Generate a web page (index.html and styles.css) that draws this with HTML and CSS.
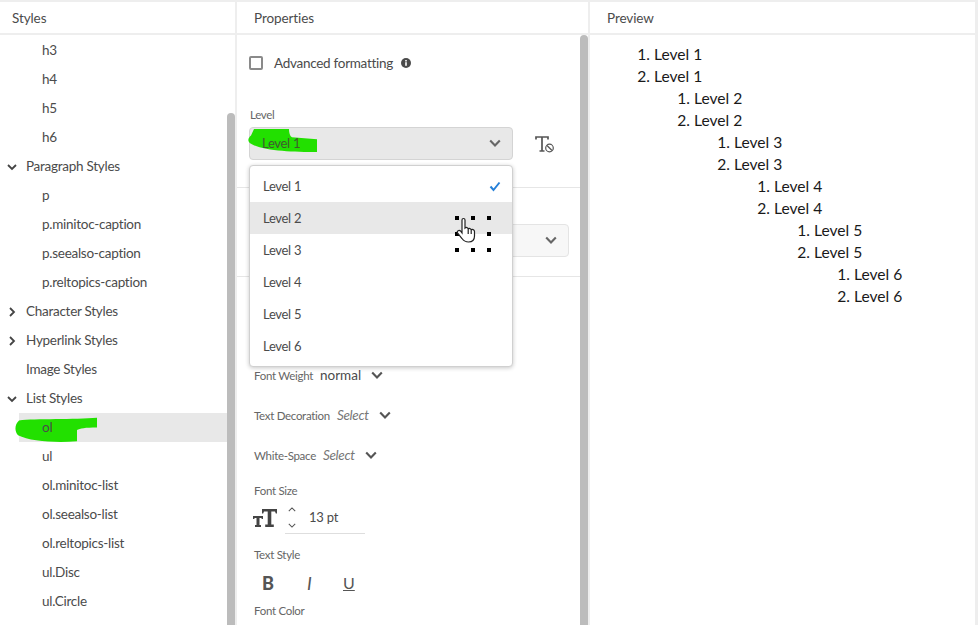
FILE: index.html
```html
<!DOCTYPE html>
<html lang="en">
<head>
<meta charset="utf-8">
<title>Styles</title>
<link rel="stylesheet" href="styles.css">
</head>
<body>
<div class="app">
  <section class="col col-styles">
    <header class="col-head">Styles</header>
    <div class="tree">
      <div class="row child">h3</div>
      <div class="row child">h4</div>
      <div class="row child">h5</div>
      <div class="row child">h6</div>
      <div class="row group"><svg class="twist" viewBox="0 0 10 10"><path d="M1 3l4 4 4-4"/></svg>Paragraph Styles</div>
      <div class="row child">p</div>
      <div class="row child">p.minitoc-caption</div>
      <div class="row child">p.seealso-caption</div>
      <div class="row child">p.reltopics-caption</div>
      <div class="row group"><svg class="twist" viewBox="0 0 10 10"><path d="M3 1l4 4-4 4"/></svg>Character Styles</div>
      <div class="row group"><svg class="twist" viewBox="0 0 10 10"><path d="M3 1l4 4-4 4"/></svg>Hyperlink Styles</div>
      <div class="row group">Image Styles</div>
      <div class="row group"><svg class="twist" viewBox="0 0 10 10"><path d="M1 3l4 4 4-4"/></svg>List Styles</div>
      <div class="row child selected">
        <svg class="mark mark-ol" viewBox="0 0 82 30" preserveAspectRatio="none"><path d="M4 4C20 2 60 3 82 1V12C70 12 65 13 62 15V28C40 30 15 28 3 21-1 16 0 8 4 4Z"/></svg>
        <span class="row-text">ol</span>
      </div>
      <div class="row child">ul</div>
      <div class="row child">ol.minitoc-list</div>
      <div class="row child">ol.seealso-list</div>
      <div class="row child">ol.reltopics-list</div>
      <div class="row child">ul.Disc</div>
      <div class="row child">ul.Circle</div>
    </div>
    <div class="scrollbar scrollbar-styles"></div>
  </section>

  <section class="col col-props">
    <header class="col-head col-head-props">Properties</header>
    <div class="props">
      <div class="adv">
        <span class="checkbox"></span>
        <span class="adv-label">Advanced formatting</span>
        <svg class="info" viewBox="0 0 10 10"><circle cx="5" cy="5" r="5"/><rect x="4.2" y="4.2" width="1.6" height="3.6" fill="#fff"/><rect x="4.2" y="2" width="1.6" height="1.5" fill="#fff"/></svg>
      </div>
      <div class="level">
        <div class="small-label level-label">Level</div>
        <div class="level-row">
          <div class="select select-level">
            <span class="select-text">Level 1</span>
            <svg class="chev" viewBox="0 0 10 10"><path d="M1 3l4 4 4-4"/></svg>
            <svg class="mark mark-level" viewBox="0 0 70 26" preserveAspectRatio="none"><path d="M6 0H41C41 4 42 8 44 9L69 11V25C45 25 15 24 3 16-1 13 0 10 3 7Z"/></svg>
          </div>
          <svg class="clear-format" viewBox="0 0 20 18"><path class="clear-t" d="M1 3.500V1H13V3.500M7 1V15M4.500 15H9.500" /><circle cx="14.500" cy="12" r="3.800"/><path d="M12 9.500L17 14.500"/></svg>
        </div>
      </div>
      <div class="second">
        <div class="select select-second">
          <svg class="chev" viewBox="0 0 10 10"><path d="M1 3l4 4 4-4"/></svg>
        </div>
      </div>
      <div class="type">
        <div class="inline-prop weight"><span class="small-label">Font Weight</span><span class="value">normal</span><svg class="chev-small" viewBox="0 0 10 10"><path d="M1 3l4 4 4-4"/></svg></div>
        <div class="inline-prop"><span class="small-label">Text Decoration</span><span class="value placeholder">Select</span><svg class="chev-small" viewBox="0 0 10 10"><path d="M1 3l4 4 4-4"/></svg></div>
        <div class="inline-prop"><span class="small-label">White-Space</span><span class="value placeholder">Select</span><svg class="chev-small" viewBox="0 0 10 10"><path d="M1 3l4 4 4-4"/></svg></div>
        <div class="small-label size-label">Font Size</div>
        <div class="size-row">
          <svg class="size-icon" viewBox="0 0 24 18"><path d="M0 7H10V10H8.800L8.300 9H6.500V16H8V18H2V16H3.500V9H1.700L1.200 10H0ZM9 0H24V4.500H22.800L22 2.500H18.300V15.500H20.800V18H12.200V15.500H14.700V2.500H11L10.200 4.500H9Z"/></svg>
          <div class="stepper">
            <svg viewBox="0 0 10 6"><path d="M1 5l4-4 4 4"/></svg>
            <svg viewBox="0 0 10 6"><path d="M1 1l4 4 4-4"/></svg>
          </div>
          <div class="size-value">13 pt</div>
        </div>
        <div class="small-label style-label">Text Style</div>
        <div class="style-row"><b class="sb">B</b><i class="si">I</i><u class="su">U</u></div>
        <div class="small-label color-label">Font Color</div>
      </div>
    </div>
    <div class="menu">
      <div class="menu-item">Level 1<svg class="check" viewBox="0 0 12 10"><path d="M1.500 5L4.500 8.500 10.500 1"/></svg></div>
      <div class="menu-item hover">Level 2</div>
      <div class="menu-item">Level 3</div>
      <div class="menu-item">Level 4</div>
      <div class="menu-item">Level 5</div>
      <div class="menu-item">Level 6</div>
    </div>
    <svg class="cursor" viewBox="0 0 40 40">
      <g class="handles"><rect x="0" y="0" width="4" height="4"/><rect x="16" y="0" width="4" height="4"/><rect x="32" y="0" width="4" height="4"/><rect x="0" y="16" width="4" height="4"/><rect x="32" y="16" width="4" height="4"/><rect x="0" y="32" width="4" height="4"/><rect x="16" y="32" width="4" height="4"/><rect x="32" y="32" width="4" height="4"/></g>
      <path class="hand" d="M7 4C7 2 10 2 10 4V12C11 11 13 11.500 13.200 13C14 12 16 12.500 16.200 14C17 13 19.500 13.500 19.500 15.500V20C19.500 24.500 17 26 13.500 26C10 26 8.500 24.500 7 22.500L2.500 17C1.500 15 4 13.500 5.500 15L7 17ZM13.200 13V18M16.200 14V18"/>
    </svg>
    <div class="scrollbar scrollbar-props"></div>
  </section>

  <section class="col col-preview">
    <header class="col-head col-head-preview">Preview</header>
    <div class="preview">
      <ol><li>Level 1</li><li>Level 1
        <ol><li>Level 2</li><li>Level 2
          <ol><li>Level 3</li><li>Level 3
            <ol><li>Level 4</li><li>Level 4
              <ol><li>Level 5</li><li>Level 5
                <ol><li>Level 6</li><li>Level 6</li></ol>
              </li></ol>
            </li></ol>
          </li></ol>
        </li></ol>
      </li></ol>
    </div>
  </section>
</div>
</body>
</html>
```
FILE: styles.css
```css
* { box-sizing: border-box; }
html, body { margin: 0; height: 100%; }
body {
  background: #eeeeee;
  font-family: "Lato", "Liberation Sans", sans-serif;
  color: #4b4b4b;
  overflow: hidden;
}
.app {
  display: flex;
  width: 975px;
  height: 625px;
  padding-top: 2px;
  gap: 2px;
}
.col {
  position: relative;
  background: #fff;
  overflow: hidden;
  height: 623px;
}
.col-styles { width: 235px; }
.col-props { width: 351px; }
.col-preview { width: 385px; }
.col-head {
  height: 33px;
  line-height: 32px;
  padding-left: 12px;
  font-size: 13.5px;
  letter-spacing: -0.1px;
  border-bottom: 2px solid #eeeeee;
}
.col-head-props { padding-left: 17px; }
.col-head-preview { padding-left: 17px; }
.tree { padding-top: 1px; }
.row {
  position: relative;
  height: 29px;
  line-height: 29px;
  font-size: 13.5px;
  letter-spacing: -0.27px;
  white-space: nowrap;
}
.child { padding-left: 42px; }
.group { padding-left: 26px; }
.twist {
  position: absolute;
  left: 7px;
  top: 10px;
  width: 10px;
  height: 10px;
  fill: none;
  stroke: #444;
  stroke-width: 1.800;
}
.selected {
  background: #e8e8e8;
  margin-left: 19px;
  margin-right: 8px;
  padding-left: 23px;
}
.row-text { position: relative; }
.mark { position: absolute; fill: #22e000; }
.mark-ol { left: -4px; top: 4px; width: 82px; height: 26px; }
.scrollbar {
  position: absolute;
  width: 8px;
  background: #bcbcbc;
  border-radius: 4px 4px 0 0;
  bottom: 0;
}
.scrollbar-styles { right: 0; top: 111px; }
.scrollbar-props { right: 0; top: 33px; }
.props { padding-left: 12px; }
.adv {
  display: flex;
  align-items: center;
  height: 55px;
}
.checkbox {
  width: 14px;
  height: 14px;
  border: 2px solid #8a8a8a;
  border-radius: 2px;
  margin-right: 11px;
}
.adv-label { font-size: 13.5px; letter-spacing: -0.28px; }
.info { width: 10px; height: 10px; margin-left: 8px; fill: #4b4b4b; }
.small-label { font-size: 11.500px; letter-spacing: -0.3px; color: #666; }
.level { height: 98px; border-bottom: 1px solid #e6e6e6; margin-right: 8px; margin-left: -12px; padding-left: 12px; }
.level-label { padding: 17px 0 0 1px; line-height: 15px; height: 37px; }
.level-row { display: flex; align-items: center; }
.select {
  position: relative;
  display: flex;
  align-items: center;
  justify-content: space-between;
  height: 33px;
  border: 1px solid #d4d4d4;
  border-radius: 4px;
  padding: 0 11px 2px 12px;
  font-size: 13px;
  letter-spacing: -0.3px;
}
.select-level { width: 264px; background: #e8e8e8; }
.select-text { position: relative; z-index: 1; color: #3f5a2f; }
.mark-level { left: -2px; top: 1px; width: 70px; height: 24px; }
.chev { width: 12px; height: 12px; fill: none; stroke: #666; stroke-width: 1.800; }
.clear-format {
  width: 20px;
  height: 18px;
  margin-left: 22px;
  margin-top: 2px;
  fill: none;
  stroke: #555;
  stroke-width: 1.200;
}
.clear-t { stroke-width: 1.700; }
.second { height: 89px; border-bottom: 1px solid #e6e6e6; margin-right: 8px; margin-left: -12px; padding: 36px 12px 0 12px; }
.select-second { width: 320px; background: #f7f7f7; justify-content: flex-end; border-color: #e4e4e4; }
.type { padding-left: 5px; }
.inline-prop {
  display: flex;
  align-items: center;
  height: 40px;
  gap: 7px;
}
.weight { margin-top: 78px; }
.value { font-size: 13.500px; color: #4b4b4b; }
.placeholder { font-style: italic; color: #777; letter-spacing: -0.3px; }
.chev-small { width: 12px; height: 12px; margin-left: 3px; fill: none; stroke: #555; stroke-width: 1.800; }
.size-label { margin-top: 8px; line-height: 15px; }
.size-row { display: flex; align-items: center; height: 37px; margin-top: 1px; margin-left: -1px; }
.size-icon { width: 24px; height: 18px; fill: #444; }
.stepper { display: flex; flex-direction: column; gap: 11px; margin-left: 11px; }
.stepper svg { display: block; width: 8px; height: 5px; fill: none; stroke: #555; stroke-width: 1.300; }
.size-value {
  width: 80px;
  height: 33px;
  line-height: 33px;
  margin-left: -11px;
  padding-left: 24px;
  font-size: 13px;
  border-bottom: 1px solid #dedede;
  letter-spacing: -0.2px;
}
.style-label { margin-top: 11px; line-height: 15px; }
.style-row { display: flex; align-items: center; height: 41px; font-size: 17px; color: #555; }
.sb { width: 40px; padding-left: 8px; font-size: 18px; font-weight: 900; }
.si { width: 40px; padding-left: 13px; font-size: 18px; font-style: italic; font-weight: 400; }
.su { margin-left: 9px; font-size: 16px; }
.color-label { line-height: 15px; }
.menu {
  position: absolute;
  left: 12px;
  top: 163px;
  width: 264px;
  height: 202px;
  background: #fff;
  border: 1px solid #d0d0d0;
  border-radius: 4px;
  box-shadow: 0 1px 4px rgba(0, 0, 0, 0.22);
  padding-top: 4px;
}
.menu-item {
  position: relative;
  height: 32px;
  line-height: 32px;
  padding-left: 13px;
  font-size: 13px;
  letter-spacing: -0.3px;
}
.menu-item.hover { background: #e8e8e8; }
.check {
  position: absolute;
  right: 11px;
  top: 11px;
  width: 12px;
  height: 11px;
  fill: none;
  stroke: #2680d8;
  stroke-width: 2;
}
.cursor {
  position: absolute;
  left: 218px;
  top: 214px;
  width: 40px;
  height: 40px;
}
.handles { fill: #000; }
.hand { fill: #fff; stroke: #222; stroke-width: 1.200; }
.preview {
  font-family: "Lato", "Liberation Sans", sans-serif;
  font-size: 15.600px;
  line-height: 22px;
  color: #1a1a1a;
  padding-top: 8px;
}
.preview ol { margin: 0; padding-left: 40px; }
.preview > ol { padding-left: 64px; }
```
